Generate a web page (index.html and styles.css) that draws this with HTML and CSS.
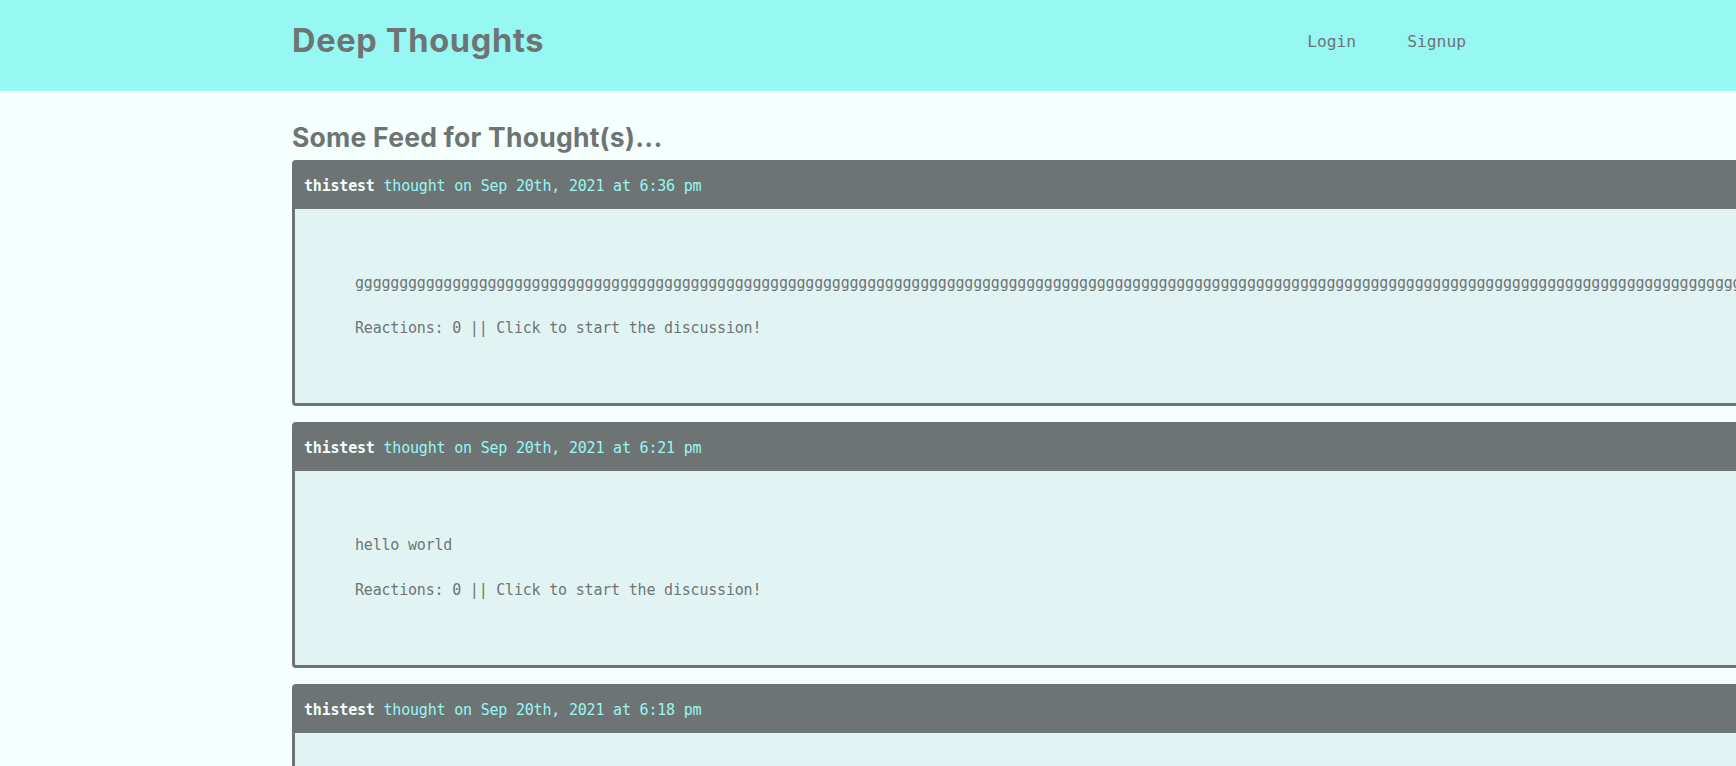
FILE: index.html
```html
<!DOCTYPE html>
<html lang="en">
<head>
<meta charset="utf-8">
<title>Deep Thoughts</title>
<link rel="stylesheet" href="styles.css">
</head>
<body>
<header class="site-header">
  <div class="header-inner">
    <h1 class="brand">Deep Thoughts</h1>
    <nav class="nav">
      <a href="#" class="nav-link">Login</a>
      <a href="#" class="nav-link">Signup</a>
    </nav>
  </div>
</header>
<main class="main">
  <h3 class="feed-title">Some Feed for Thought(s)...</h3>
  <div class="feed">
    <article class="card">
      <div class="card-header"><span class="username">thistest</span> thought on Sep 20th, 2021 at 6:36 pm</div>
      <div class="card-body">
        <p class="thought">gggggggggggggggggggggggggggggggggggggggggggggggggggggggggggggggggggggggggggggggggggggggggggggggggggggggggggggggggggggggggggggggggggggggggggggggggggggggggggggggggggggggggggggggggggggggggggggggggggggggggggggggggggggggggg</p>
        <p class="reactions">Reactions: 0 || Click to start the discussion!</p>
      </div>
    </article>
    <article class="card">
      <div class="card-header"><span class="username">thistest</span> thought on Sep 20th, 2021 at 6:21 pm</div>
      <div class="card-body">
        <p class="thought">hello world</p>
        <p class="reactions">Reactions: 0 || Click to start the discussion!</p>
      </div>
    </article>
    <article class="card">
      <div class="card-header"><span class="username">thistest</span> thought on Sep 20th, 2021 at 6:18 pm</div>
      <div class="card-body">
        <p class="thought">test</p>
        <p class="reactions">Reactions: 0 || Click to start the discussion!</p>
      </div>
    </article>
  </div>
</main>
</body>
</html>
```

FILE: styles.css
```css
html, body {
  margin: 0;
  padding: 0;
}

body {
  background: #f4fffe;
  color: #6e7474;
  font-family: "DejaVu Sans Mono", "Liberation Mono", monospace;
  overflow: hidden;
}

.site-header {
  background: #97f7f2;
  height: 91px;
}

.header-inner {
  display: flex;
  justify-content: space-between;
  align-items: flex-start;
  padding: 0 270px 0 292px;
}

.brand {
  margin: 24.5px 0 0 0;
  font-family: Inter, "Open Sans", sans-serif;
  font-weight: 700;
  font-size: 32.5px;
  line-height: 32.5px;
  color: #6e7474;
  letter-spacing: 0.7px;
}

.nav {
  display: flex;
  gap: 51px;
  margin-top: 32px;
}

.nav-link {
  font-size: 16.3px;
  line-height: 20px;
  color: #6e7474;
  text-decoration: none;
}

.main {
  padding-left: 292px;
}

.feed-title {
  margin: 30px 0 7px 0;
  font-family: Inter, "Open Sans", sans-serif;
  font-weight: 700;
  font-size: 26.5px;
  line-height: 32px;
  color: #6e7474;
  letter-spacing: 0.25px;
}

.feed {
  display: flex;
  flex-direction: column;
  gap: 16px;
  width: max-content;
}

.card {
  border: 3px solid #6e7474;
  border-radius: 4px;
  background: #e1f4f3;
}

.card-header {
  background: #6e7474;
  color: #97f7f2;
  font-size: 15px;
  letter-spacing: -0.2px;
  line-height: 22.5px;
  padding: 12.3px 9px 11.2px 9px;
}

.username {
  color: #f4fffe;
  font-weight: 700;
}

.card-body {
  display: flex;
  flex-direction: column;
  gap: 22.5px;
  padding: 63.5px 0 63px 60px;
}

.thought,
.reactions {
  margin: 0;
  font-size: 15px;
  letter-spacing: -0.2px;
  line-height: 22.5px;
  white-space: nowrap;
}
```
